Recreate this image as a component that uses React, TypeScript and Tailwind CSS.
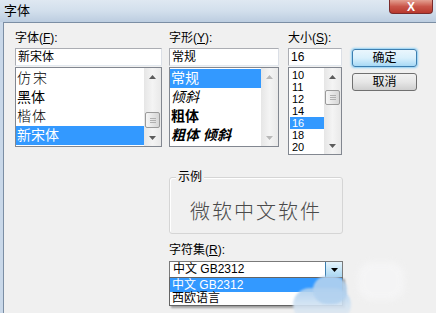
import React from 'react';

type Item = { text: string; cls?: string };

const fontList: Item[] = [
  { text: '仿宋', cls: 'font-light text-[#555] tracking-[2px]' },
  { text: '黑体' },
  { text: '楷体', cls: 'font-light text-[#333] tracking-[1px]' },
  { text: '新宋体' },
];

const styleList: Item[] = [
  { text: '常规' },
  { text: '倾斜', cls: 'italic' },
  { text: '粗体', cls: 'font-bold' },
  { text: '粗体 倾斜', cls: 'italic font-bold' },
];

const sizes = ['10', '11', '12', '14', '16', '18', '20'];

const Arrow = ({ up, color }: { up?: boolean; color: string }) => (
  <svg width="7" height="4" viewBox="0 0 7 4">
    <path d={up ? 'M0 4 L3.5 0 L7 4 Z' : 'M0 0 L3.5 4 L7 0 Z'} fill={color} />
  </svg>
);

// vertical scrollbar, thumbTop = null means nothing to scroll
const ScrollBar = ({ thumbTop, thumbH }: { thumbTop: number | null; thumbH?: number }) => {
  const arrowColor = thumbTop === null ? '#b8b8b8' : '#5c5c5c';
  return (
    <div className="w-[17px] h-full flex flex-col bg-gradient-to-r from-[#e6e6e6] via-[#f4f4f4] to-[#e9e9e9]">
      <div className="h-[17px] flex items-center justify-center">
        <Arrow up color={arrowColor} />
      </div>
      <div className="flex-1 relative">
        {thumbTop !== null && (
          <div
            className="absolute left-[1px] right-[1px] rounded-[2px] border border-[#9a9a9a] bg-gradient-to-r from-[#f6f6f6] to-[#d6d6d6] flex flex-col items-center justify-center gap-[1px]"
            style={{ top: thumbTop, height: thumbH }}
          >
            <div className="w-[6px] h-px bg-[#b0b0b0]" />
            <div className="w-[6px] h-px bg-[#b0b0b0]" />
            <div className="w-[6px] h-px bg-[#b0b0b0]" />
          </div>
        )}
      </div>
      <div className="h-[17px] flex items-center justify-center">
        <Arrow color={arrowColor} />
      </div>
    </div>
  );
};

const Label = ({ text, k }: { text: string; k: string }) => (
  <div className="h-[14px] text-[12px] leading-[14px] text-black whitespace-nowrap">
    {text}(<span className="underline">{k}</span>):
  </div>
);

const TextBox = ({ value }: { value: string }) => (
  <div className="mt-[3px] h-[18px] bg-white border border-[#abadb3] border-b-[#e3e9ef] border-r-[#dbdfe6] pl-[2px] text-[12px] leading-[16px] text-black">
    {value}
  </div>
);

export default function App() {
  return (
    <div className="w-[436px] h-[313px] overflow-hidden relative flex flex-col bg-[#c9d8e9] font-['Liberation_Sans','Noto_Sans_CJK_SC',sans-serif]">
      {/* title bar */}
      <div className="h-[22px] shrink-0 flex justify-between bg-gradient-to-b from-[#dfe8f2] via-[#d2dfec] to-[#bccde0]">
        <span className="pl-[4px] pt-[3px] text-[13px] leading-[15px] text-black">字体</span>
        <div className="mr-[3px] w-[44px] h-[14px] rounded-b-[4px] border border-t-0 border-[#7a2b2b] bg-gradient-to-b from-[#e3a092] via-[#c9564a] to-[#b8382d] flex items-center justify-center">
          <span className="text-white text-[12px] font-bold leading-[12px]">X</span>
        </div>
      </div>

      {/* dialog body */}
      <div className="flex-1 ml-[3px] border-l border-t border-[#7b8ea4] bg-[#f0f0f0] pt-[8px] pl-[11px]">
        <div className="flex">
          {/* font name */}
          <div className="w-[147px] flex flex-col">
            <Label text="字体" k="F" />
            <TextBox value="新宋体" />
            <div className="mt-[1px] h-[80px] bg-white border border-[#828790] flex">
              <div className="flex-1 pt-[1px] flex flex-col">
                {fontList.map((it, i) => (
                  <div
                    key={i}
                    className={`h-[19px] pl-[1px] text-[14px] leading-[19px] whitespace-nowrap ${
                      i === 3 ? 'bg-[#3399ff] text-white' : 'text-black'
                    } ${it.cls ?? ''}`}
                  >
                    {it.text}
                  </div>
                ))}
              </div>
              <ScrollBar thumbTop={27} thumbH={16} />
            </div>
          </div>

          {/* font style */}
          <div className="w-[110px] ml-[7px] flex flex-col">
            <Label text="字形" k="Y" />
            <TextBox value="常规" />
            <div className="mt-[1px] h-[80px] bg-white border border-[#828790] flex">
              <div className="flex-1 pt-[1px] flex flex-col">
                {styleList.map((it, i) => (
                  <div
                    key={i}
                    className={`h-[19px] pl-[1px] text-[14px] leading-[19px] whitespace-nowrap ${
                      i === 0 ? 'bg-[#3399ff] text-white' : 'text-black'
                    } ${it.cls ?? ''}`}
                  >
                    {it.text}
                  </div>
                ))}
              </div>
              <ScrollBar thumbTop={null} />
            </div>
          </div>

          {/* size */}
          <div className="w-[54px] ml-[9px] flex flex-col">
            <Label text="大小" k="S" />
            <TextBox value="16" />
            <div className="mt-[1px] h-[88px] bg-white border border-[#828790] flex">
              <div className="flex-1 pt-[1px] pl-[1px] flex flex-col">
                {sizes.map((s) => (
                  <div
                    key={s}
                    className={`h-[12px] pl-[2px] text-[11px] leading-[12px] ${
                      s === '16' ? 'bg-[#3399ff] text-white' : 'text-black'
                    }`}
                  >
                    {s}
                  </div>
                ))}
              </div>
              <ScrollBar thumbTop={5} thumbH={15} />
            </div>
          </div>

          {/* buttons */}
          <div className="w-[65px] ml-[10px] pt-[18px] flex flex-col gap-[6px]">
            <button className="h-[18px] rounded-[3px] border border-[#3c7fb1] shadow-[0_0_2px_1px_#8fd0f5] bg-gradient-to-b from-[#eaf6fd] via-[#d9f0fc] to-[#a7d9f5] text-[12px] leading-[16px] text-black">
              确定
            </button>
            <button className="h-[18px] rounded-[3px] border border-[#707070] bg-gradient-to-b from-[#f2f2f2] via-[#e6e6e6] to-[#cfcfcf] text-[12px] leading-[16px] text-black">
              取消
            </button>
          </div>
        </div>

        {/* sample + charset */}
        <div className="ml-[154px] w-[174px] flex flex-col">
          <div className="mt-[22px] relative h-[57px] rounded-[3px] border border-[#d5d5d5] shadow-[inset_1px_1px_0_#ffffff] flex items-center justify-center pt-[13px]">
            <span className="absolute -top-[8px] left-[6px] bg-[#f0f0f0] px-[2px] text-[12px] leading-[14px] text-black">
              示例
            </span>
            <span className="text-[20px] leading-[22px] tracking-[2px] text-[#4a4a4a] font-light">
              微软中文软件
            </span>
          </div>

          <div className="mt-[9px]">
            <Label text="字符集" k="R" />
          </div>

          <div className="mt-[4px] h-[17px] bg-white border border-[#7a7a7a] flex">
            <span className="flex-1 pl-[3px] text-[12px] leading-[15px] text-black whitespace-nowrap">中文 GB2312</span>
            <div className="w-[17px] border-l border-[#3c7fb1] bg-gradient-to-b from-[#e5f4fc] to-[#a9d7f2] flex items-center justify-center">
              <Arrow color="#000000" />
            </div>
          </div>

          <div className="-mt-px h-[29px] bg-white border border-[#646464] shadow-[2px_2px_2px_rgba(0,0,0,0.35)] flex flex-col">
            <div className="h-[14px] bg-[#3399ff] text-white pl-[2px] text-[12px] leading-[14px] whitespace-nowrap">中文 GB2312</div>
            <div className="h-[13px] text-black pl-[2px] text-[12px] leading-[13px]">西欧语言</div>
          </div>
        </div>
      </div>

      {/* watermark cloud over the corner */}
      <div className="absolute left-[293px] top-[288px] w-[58px] h-[34px] rounded-[17px] bg-gradient-to-b from-[#a9cdee] via-[#d2e3f3] to-[#e6eaee] blur-[1px] opacity-90" />
      <div className="absolute left-[313px] top-[276px] w-[34px] h-[28px] rounded-full bg-[#b3d2ef] blur-[1px] opacity-90" />
      <div className="absolute left-[358px] top-[262px] w-[46px] h-[38px] rounded-[14px] bg-[#f7f7f8] blur-[3px] opacity-70" />
    </div>
  );
}
